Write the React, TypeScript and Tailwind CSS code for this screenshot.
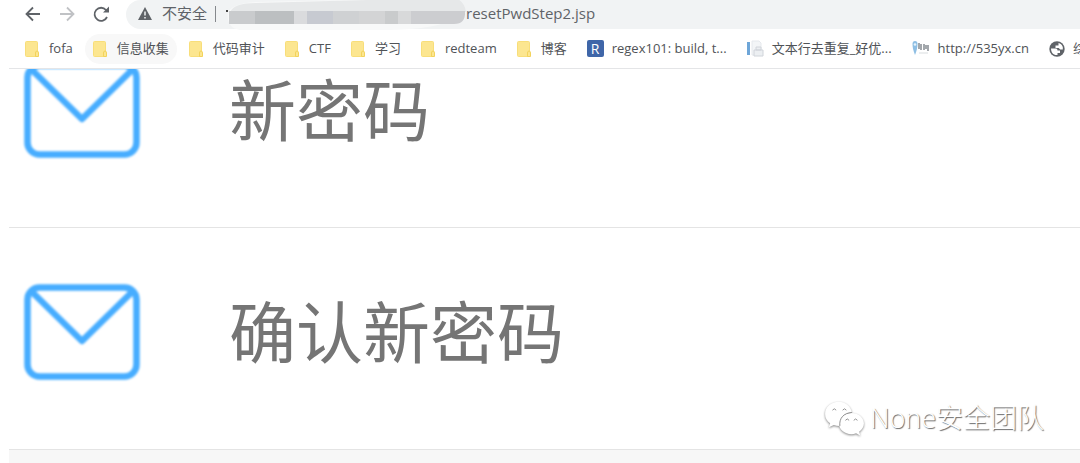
import type { ReactNode } from "react";

const FolderIcon = () => (
  <svg width="16" height="18" viewBox="0 0 16 18" className="shrink-0" aria-hidden="true">
    <rect x="0.5" y="1.5" width="12" height="15" rx="1" fill="#fce690" stroke="#f8de7a" />
    <path d="M10.500 16.500v-3.500q0-2 1.500-2t1.500 2v3.500z" fill="#fce690" stroke="#f3d35c" />
  </svg>
);

const RegexIcon = () => (
  <span className="flex h-[17px] w-[17px] shrink-0 items-center justify-center rounded-xs bg-[#3f66a8] text-[14px] leading-4 text-white">
    R
  </span>
);

const DocIcon = () => (
  <svg width="17" height="17" viewBox="0 0 17 17" className="shrink-0" aria-hidden="true">
    <path d="M0 2h3v13H0z" fill="#6ea6d8" />
    <path d="M5 1h7l2 2v12H5z" fill="#f3f5f7" stroke="#e6e9ed" />
    <path d="M7 10h9v6H7zM9 7h5v3H9z" fill="#eceff2" stroke="#d0d4da" />
  </svg>
);

const SiteIcon = () => (
  <svg width="18" height="17" viewBox="0 0 18 17" className="shrink-0" aria-hidden="true">
    <path d="M3 15C1 10 0.500 7 0.500 4a2.500 3 0 0 1 5 0c0 4-1 7-2.500 11z" fill="#8fbfe4" />
    <circle cx="3" cy="4.500" r="1.300" fill="#e6f2fb" />
    <path d="M7 3v6M9 4v6M12 4v6M14 5v4M16 5v6" stroke="#858b91" strokeWidth="1.500" />
    <path d="M7 13h9" stroke="#eceeef" strokeWidth="2" />
  </svg>
);

const GlobeIcon = () => (
  <svg width="16" height="16" viewBox="0 0 16 16" className="shrink-0" aria-hidden="true">
    <circle cx="8" cy="8" r="7.700" fill="#5f6368" />
    <path d="M2 7.500h5q1.500 0 1.500 2H11v2.500H8.500v2C4.500 14.500 2 11.500 2 7.500zM9.500 2c2 .5 3.500 1.500 4.300 4v2.500h-2.600L9.700 7H6.500V4.500h3z" fill="#fff" />
  </svg>
);

const MailIcon = () => (
  <svg width="118" height="98" viewBox="0 0 118 98" fill="none" stroke="#47adff" strokeWidth="6.500" strokeLinejoin="round" className="shrink-0 blur-[1px]" aria-hidden="true">
    <rect x="4.500" y="4.500" width="109" height="89" rx="12" />
    <path d="M8 8l51 50 51-50" />
  </svg>
);

const WechatIcon = () => (
  <svg width="43" height="37" viewBox="0 0 46 40" fill="#fff" className="shrink-0 drop-shadow-[0_1px_1px_#888]" aria-hidden="true">
    <path d="M17 2C8.500 2 2 7.500 2 15c0 4.500 2 7.500 5.500 10L6 29.500l5.500-2.500q3 1 6 1C17 20 22 14 31 13.500 29.500 6.500 24 2 17 2z" />
    <path d="M30.500 14C23 14 17 19 17 25.500S23 37 30.500 37q2.500 0 5-1l4.500 2.500-1.200-4.200C42 32 44 29 44 25.500 44 19 38 14 30.500 14z" />
    <path d="M18 28C17 20 22 14 31 13.500M10 11q2-3 4 0M21 11q2-3 4 0M24 22q2-3 4 0M33 22q2-3 4 0" fill="none" stroke="#888" />
  </svg>
);

// Mosaic that hides the host name
const HiddenHost = () => (
  <svg width="240" height="32" viewBox="0 0 240 32" className="shrink-0" aria-hidden="true">
    <path d="M2 14Q8 5 30 4L215 0h15q12 6 9 18-4 8-24 8-20 6-65 6H14Q0 30 2 14z" fill="#f8f9f9" />
    <path d="M30 5L215 0h15q9 4 10 14H4Q8 5 30 5z" fill="#e6e8e9" />
    <path d="M3 13h26v13H3z" fill="#c9cbcd" />
    <path d="M29 13h39v13H29z" fill="#bcbfc1" />
    <path d="M68 13h13v13H68z" fill="#dadbdd" />
    <path d="M81 13h26v13H81z" fill="#c7cad1" />
    <path d="M107 13h26v13h-26z" fill="#cfd1d3" />
    <path d="M133 13h26v13h-26z" fill="#d3d4d5" />
    <path d="M159 13h13v13h-13z" fill="#c9cbcc" />
    <path d="M172 13h13v13h-13z" fill="#d8d9da" />
    <path d="M185 13h54q1 13-11 13h-43z" fill="#cccdd0" />
    <path d="M0 12h2v2H0z" fill="#444" />
  </svg>
);

type Bookmark = {
  label: string;
  icon: ReactNode;
  active?: boolean;
};

const bookmarks: Bookmark[] = [
  { label: "fofa", icon: <FolderIcon /> },
  { label: "信息收集", icon: <FolderIcon />, active: true },
  { label: "代码审计", icon: <FolderIcon /> },
  { label: "CTF", icon: <FolderIcon /> },
  { label: "学习", icon: <FolderIcon /> },
  { label: "redteam", icon: <FolderIcon /> },
  { label: "博客", icon: <FolderIcon /> },
  { label: "regex101: build, t...", icon: <RegexIcon /> },
  { label: "文本行去重复_好优...", icon: <DocIcon /> },
  { label: "http://535yx.cn", icon: <SiteIcon /> },
  { label: "综合", icon: <GlobeIcon /> },
];

const Toolbar = () => (
  <div className="flex h-[29px] items-start text-[#5f6368]">
    <div className="flex h-[27px] shrink-0 items-center gap-4 pl-6">
      <button type="button" aria-label="后退">
        <svg width="18" height="18" viewBox="0 0 18 18" fill="none" stroke="currentColor" strokeWidth="1.800">
          <path d="M16 9H3M9 2.500L2.500 9 9 15.500" />
        </svg>
      </button>
      <button type="button" aria-label="前进" className="text-[#c0c2c5]">
        <svg width="18" height="18" viewBox="0 0 18 18" fill="none" stroke="currentColor" strokeWidth="1.800">
          <path d="M2 9h13M9 2.500L15.500 9 9 15.500" />
        </svg>
      </button>
      <button type="button" aria-label="重新加载">
        <svg width="18" height="18" viewBox="0 0 18 18" fill="none" stroke="currentColor" strokeWidth="1.800">
          <path d="M15 12A6.500 6.500 0 1 1 14 5L15.500 6" />
          <path d="M17 1.500v6h-6z" fill="currentColor" stroke="none" />
        </svg>
      </button>
    </div>
    <div className="ml-4 flex h-[29px] min-w-0 flex-1 items-start rounded-l-full bg-[#f1f3f4] pl-3 text-[15px] whitespace-nowrap">
      <div className="flex h-[27px] items-center">
        <svg width="14" height="13" viewBox="0 0 14 13" className="mr-2.5 shrink-0" aria-hidden="true">
          <path d="M7 0l7 13H0z" fill="#5f6368" />
          <path d="M7 4.500v4M7 10v1.500" stroke="#f1f3f4" strokeWidth="1.500" />
        </svg>
        <span>不安全</span>
        <span className="mr-2.5 ml-2 h-4 w-px shrink-0 bg-[#85888c]" />
        <HiddenHost />
        <span>resetPwdStep2.jsp</span>
      </div>
    </div>
  </div>
);

const BookmarkBar = () => (
  <nav className="ml-[9px] flex h-10 items-center gap-1 overflow-hidden border-b border-[#e4e5e7] pl-2 text-[13px] text-[#505357]">
    {bookmarks.map(({ label, icon, active }) => (
      <a
        key={label}
        href="#"
        className={`flex h-[30px] shrink-0 items-center gap-2 rounded-full px-2 whitespace-nowrap ${active ? "bg-[#f8f8f8]" : ""}`}
      >
        {icon}
        {label}
      </a>
    ))}
  </nav>
);

const PasswordField = ({ id, label }: { id: string; label: string }) => (
  <div className="flex items-center border-b border-[#e4e4e4] pt-[55px] pb-[68px] pl-3.5">
    <label htmlFor={id} aria-label={label}>
      <MailIcon />
    </label>
    <input
      id={id}
      type="password"
      placeholder={label}
      className="ml-22 h-[98px] min-w-0 flex-1 bg-transparent text-[67px] outline-none placeholder:text-[#757575]"
    />
  </div>
);

export default function App() {
  return (
    <div className="relative min-h-screen overflow-hidden bg-white font-['Open_Sans','Noto_Sans_CJK_SC',sans-serif]">
      <header>
        <Toolbar />
        <BookmarkBar />
      </header>
      {/* the page is scrolled, so the first row is cut off by the header */}
      <main className="ml-[9px] overflow-hidden">
        <form className="-mt-[63px]">
          <PasswordField id="new-password" label="新密码" />
          <PasswordField id="confirm-password" label="确认新密码" />
        </form>
        <div className="h-4 bg-[#f7f7f7]" />
      </main>
      <div className="absolute right-9 bottom-7 flex items-center gap-1 text-[27px] leading-10 font-light text-white [text-shadow:1px_1px_1px_#666]">
        <WechatIcon />
        <span>None安全团队</span>
      </div>
    </div>
  );
}
